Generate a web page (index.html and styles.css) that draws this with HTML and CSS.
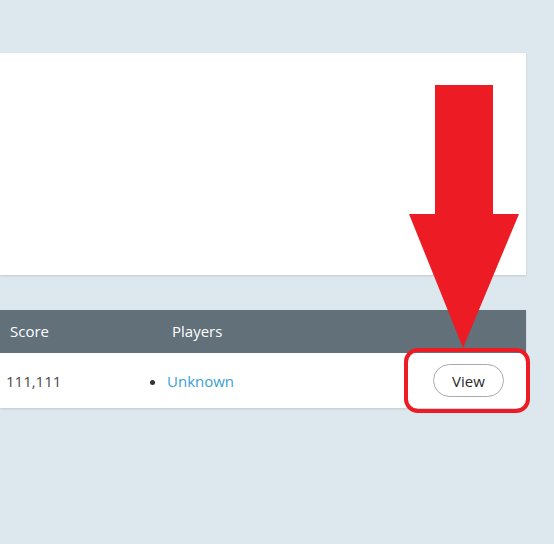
FILE: index.html
```html
<!DOCTYPE html>
<html>
<head>
<meta charset="utf-8">
<link rel="stylesheet" href="styles.css">
</head>
<body>
<div class="page">
  <div class="card"></div>
  <div class="table">
    <div class="row head">
      <div class="c-score">Score</div>
      <div class="c-players">Players</div>
      <div class="c-action"></div>
    </div>
    <div class="row body">
      <div class="c-score">111,111</div>
      <div class="c-players"><ul class="plist"><li><a href="#">Unknown</a></li></ul></div>
      <div class="c-action"><button class="btn">View</button></div>
    </div>
  </div>
</div>
<svg class="annot" width="554" height="544" viewBox="0 0 554 544">
  <polygon points="435,85 493,85 493,214 519,214 463,348 409,214 435,214" fill="#ed1c24"/>
  <rect x="406" y="350" width="122" height="61" rx="12" ry="12" fill="none" stroke="#ed1c24" stroke-width="4"/>
</svg>
</body>
</html>
```
FILE: styles.css
```css
html, body {
  margin: 0;
  padding: 0;
}
body {
  background: #dde7ee;
  font-family: "Open Sans", "Liberation Sans", sans-serif;
  font-size: 15px;
  width: 554px;
  height: 544px;
  overflow: hidden;
  position: relative;
}
.page {
  padding-top: 53px;
  width: 526px;
  display: flex;
  flex-direction: column;
  gap: 35px;
}
.card {
  background: #fff;
  height: 222px;
  box-shadow: 0 1px 2px rgba(0, 0, 0, 0.12);
}
.table {
  background: #fff;
  box-shadow: 0 1px 2px rgba(0, 0, 0, 0.12);
}
.row {
  display: flex;
  align-items: center;
}
.head {
  background: #627079;
  color: #fff;
  height: 43px;
  box-sizing: border-box;
  padding-bottom: 2px;
}
.body {
  height: 55px;
  color: #4a4a4a;
}
.c-score {
  width: 150px;
  padding-left: 10px;
  box-sizing: border-box;
}
.body .c-score {
  padding-left: 6px;
}
.c-players {
  width: 172px;
  padding-left: 22px;
  box-sizing: border-box;
}
.body .c-players {
  padding-left: 0;
}
.c-action {
  flex: 1;
  display: flex;
  justify-content: flex-end;
  padding-right: 22px;
}
.plist {
  margin: 0;
  padding: 0 0 0 17px;
  list-style: disc;
  color: #333;
}
.plist a {
  color: #3a9fd6;
  text-decoration: none;
}
.btn {
  font-family: "Open Sans", "Liberation Sans", sans-serif;
  font-size: 15px;
  color: #2b2b2b;
  background: #fff;
  border: 1px solid #aaa;
  border-radius: 17px;
  width: 71px;
  height: 33px;
  padding: 0;
}
.annot {
  position: absolute;
  left: 0;
  top: 0;
  pointer-events: none;
}
```
